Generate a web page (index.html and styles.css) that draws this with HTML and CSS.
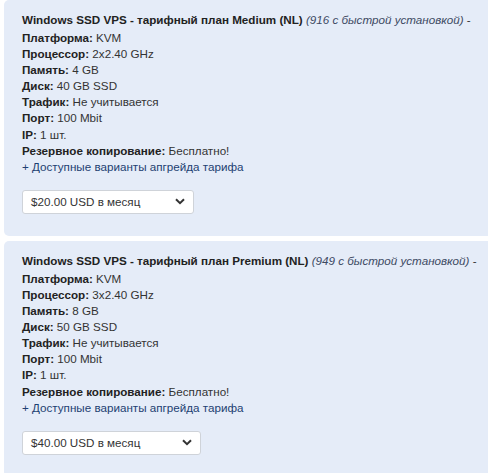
FILE: index.html
```html
<!DOCTYPE html>
<html>
<head>
<meta charset="utf-8">
<link rel="stylesheet" href="styles.css">
</head>
<body>
<div class="list">
  <div class="card">
    <div class="title"><strong>Windows SSD VPS - тарифный план Medium (NL)</strong> <em>(916 с быстрой установкой)</em> -</div>
    <div class="row"><b>Платформа:</b> KVM</div>
    <div class="row"><b>Процессор:</b> 2x2.40 GHz</div>
    <div class="row"><b>Память:</b> 4 GB</div>
    <div class="row"><b>Диск:</b> 40 GB SSD</div>
    <div class="row"><b>Трафик:</b> Не учитывается</div>
    <div class="row"><b>Порт:</b> 100 Mbit</div>
    <div class="row"><b>IP:</b> 1 шт.</div>
    <div class="row"><b>Резервное копирование:</b> Бесплатно!</div>
    <div class="row"><a class="link" href="#">+ Доступные варианты апгрейда тарифа</a></div>
    <div class="select select-medium">
      <span>$20.00 USD в месяц</span>
      <svg class="chev" width="10" height="7" viewBox="0 0 10 7"><path d="M1 1.2 L5 5.2 L9 1.2" fill="none" stroke="#333" stroke-width="2"/></svg>
    </div>
  </div>
  <div class="card">
    <div class="title"><strong>Windows SSD VPS - тарифный план Premium (NL)</strong> <em>(949 с быстрой установкой)</em> -</div>
    <div class="row"><b>Платформа:</b> KVM</div>
    <div class="row"><b>Процессор:</b> 3x2.40 GHz</div>
    <div class="row"><b>Память:</b> 8 GB</div>
    <div class="row"><b>Диск:</b> 50 GB SSD</div>
    <div class="row"><b>Трафик:</b> Не учитывается</div>
    <div class="row"><b>Порт:</b> 100 Mbit</div>
    <div class="row"><b>IP:</b> 1 шт.</div>
    <div class="row"><b>Резервное копирование:</b> Бесплатно!</div>
    <div class="row"><a class="link" href="#">+ Доступные варианты апгрейда тарифа</a></div>
    <div class="select select-premium">
      <span>$40.00 USD в месяц</span>
      <svg class="chev" width="10" height="7" viewBox="0 0 10 7"><path d="M1 1.2 L5 5.2 L9 1.2" fill="none" stroke="#333" stroke-width="2"/></svg>
    </div>
  </div>
</div>
</body>
</html>
```
FILE: styles.css
```css
html, body {
  margin: 0;
  padding: 0;
  background: #ffffff;
}
body {
  font-family: "Liberation Sans", Arial, sans-serif;
  font-size: 11.65px;
  color: #333333;
  overflow: hidden;
}
.list {
  display: flex;
  flex-direction: column;
  gap: 5px;
  padding-left: 4px;
  width: 500px;
}
.card {
  background: #e5ecf8;
  border-radius: 5px;
  padding: 12px 18px 22px 18px;
}
.title {
  line-height: 16px;
  margin-bottom: 2px;
  white-space: nowrap;
}
.row {
  line-height: 16.1px;
  white-space: nowrap;
}
.title strong, .row b {
  color: #222222;
  font-weight: bold;
}
.title em {
  color: #3d4a63;
}
.link {
  color: #1d3f72;
  text-decoration: none;
}
.select {
  margin-top: 15px;
  display: flex;
  align-items: center;
  justify-content: space-between;
  box-sizing: border-box;
  height: 24px;
  padding: 0 8px 0 8px;
  background: #ffffff;
  border: 1px solid #cfd3d9;
  border-radius: 3px;
  color: #333333;
}
.select-medium { width: 172px; }
.select-premium { width: 179px; }
.chev { display: block; }
```
